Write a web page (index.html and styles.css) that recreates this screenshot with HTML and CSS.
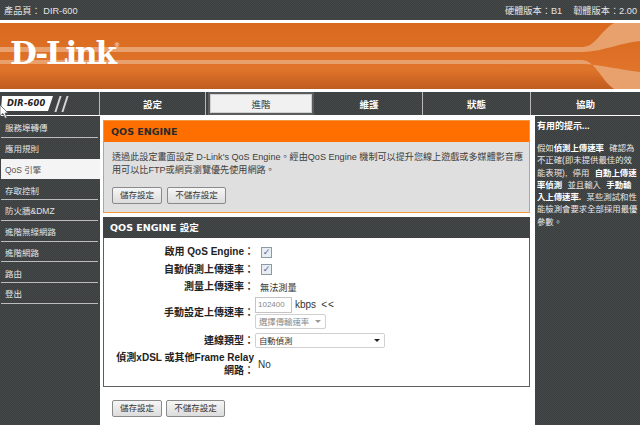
FILE: index.html
```html
<!DOCTYPE html>
<html lang="zh-Hant">
<head>
<meta charset="utf-8">
<title>D-Link DIR-600</title>
<link rel="stylesheet" href="styles.css">
</head>
<body>
<div class="page">
  <header class="topbar">
    <span>產品頁： DIR-600</span>
    <span class="versions"><span>硬體版本：B1</span><span>韌體版本：2.00</span></span>
  </header>
  <div class="banner">
    <svg class="banner-art" viewBox="0 0 640 66" preserveAspectRatio="none" aria-hidden="true">
      <defs>
        <linearGradient id="bg" x1="0" y1="0" x2="0" y2="1">
          <stop offset="0" stop-color="#d9691f"/>
          <stop offset=".7" stop-color="#e0742a"/>
          <stop offset="1" stop-color="#bf5c20"/>
        </linearGradient>
      </defs>
      <rect width="640" height="66" fill="url(#bg)"/>
      <path fill="#e8a06d" d="M0 24H582C596 24 600 8 614 0H640V18C620 20 604 28 584 29H0Z"/>
      <path fill="#e8a06d" d="M0 37H582C596 38 600 56 614 66H640V49C620 47 604 42 584 41H0Z"/>
    </svg>
    <span class="logo">D-Link<sup class="reg">®</sup></span>
  </div>
  <nav class="nav">
    <div class="model">
      <span class="model-badge">DIR-600</span>
      <span class="slashes"><i></i><i></i></span>
      <svg class="cursor" viewBox="0 0 9 14" aria-hidden="true"><path d="M0 0V11L3 8.500L5 13H7L5 8H8Z" fill="#fff" stroke="#555" stroke-width=".8"/></svg>
    </div>
    <a class="tab">設定</a>
    <a class="tab tab-active">進階</a>
    <a class="tab">維護</a>
    <a class="tab">狀態</a>
    <a class="tab tab-last">協助</a>
  </nav>
  <div class="content">
    <aside class="sidebar">
      <a class="side-item">服務埠轉傳</a>
      <a class="side-item">應用規則</a>
      <a class="side-item side-active">QoS 引擎</a>
      <a class="side-item">存取控制</a>
      <a class="side-item">防火牆&amp;DMZ</a>
      <a class="side-item">進階無線網路</a>
      <a class="side-item">進階網路</a>
      <a class="side-item">路由</a>
      <a class="side-item">登出</a>
    </aside>
    <main class="main">
      <section class="intro">
        <h2 class="intro-title">QOS ENGINE</h2>
        <div class="intro-body">
          <p class="intro-text">透過此設定畫面設定 D-Link's QoS Engine。經由QoS Engine 機制可以提升您線上遊戲或多媒體影音應用可以比FTP或網頁瀏覽優先使用網路。</p>
          <div class="buttons"><button class="btn btn-save">儲存設定</button><button class="btn btn-nosave">不儲存設定</button></div>
        </div>
      </section>
      <section class="settings">
        <h2 class="settings-title">QOS ENGINE 設定</h2>
        <div class="form">
          <div class="row"><label class="lbl">啟用 QoS Engine：</label><div class="ctl"><span class="check">✓</span></div></div>
          <div class="row"><label class="lbl">自動偵測上傳速率：</label><div class="ctl"><span class="check">✓</span></div></div>
          <div class="row"><label class="lbl">測量上傳速率：</label><div class="ctl ctl-text">無法測量</div></div>
          <div class="row row-rate"><label class="lbl">手動設定上傳速率：</label>
            <div class="ctl ctl-stack">
              <div class="rate-line"><span class="input">102400</span><span class="unit">kbps</span><span class="arrows">&lt;&lt;</span></div>
              <div class="select select-small"><span>選擇傳輸速率</span><b class="caret caret-light"></b></div>
            </div>
          </div>
          <div class="row row-type"><label class="lbl">連線類型：</label><div class="ctl"><div class="select select-wide"><span>自動偵測</span><b class="caret"></b></div></div></div>
          <div class="row row-xdsl"><label class="lbl">偵測xDSL 或其他Frame Relay 網路：</label><div class="ctl ctl-no">No</div></div>
        </div>
      </section>
      <div class="buttons buttons-bottom"><button class="btn btn-save">儲存設定</button><button class="btn btn-nosave">不儲存設定</button></div>
    </main>
    <aside class="hints">
      <h3 class="hints-title">有用的提示...</h3>
      <p class="hints-text">假如<b>偵測上傳速率</b> 確認為不正確(即未提供最佳的效能表現), 停用 <b>自動上傳速率偵測</b> 並且輸入 <b>手動輸入上傳速率.</b> 某些測試和性能檢測會要求全部採用最優參數。</p>
    </aside>
  </div>
</div>
</body>
</html>
```

FILE: styles.css
```css
* { box-sizing: border-box; }
html, body { margin: 0; padding: 0; background: #fff; }
body { font-family: "Liberation Sans", "Noto Sans CJK TC", sans-serif; font-size: 10px; color: #333; }
.page { width: 640px; height: 425px; overflow: hidden; }

.topbar, .nav, .sidebar, .hints, .settings-title {
  background-color: #404344;
  background-image: repeating-conic-gradient(#3b3e3f 0 25%, #46494a 0 50%);
  background-size: 2px 2px;
}

.topbar { height: 20px; padding: 0 3px 0 4px; display: flex; justify-content: space-between; align-items: center; color: #e4e4e4; font-size: 9.200px; }
.versions { display: flex; gap: 11px; }

.banner { position: relative; height: 66px; margin-top: 3px; overflow: hidden; }
.banner-art { position: absolute; inset: 0; width: 100%; height: 100%; display: block; }
.logo { position: absolute; left: 10px; top: 10px; color: #fff; font: 700 31px/40px "DejaVu Serif", serif; letter-spacing: -2.200px; }
.reg { font: 400 6px/6px "Liberation Sans", sans-serif; letter-spacing: 0; vertical-align: 17px; }

.nav { height: 23px; margin-top: 3px; display: grid; grid-template-columns: 100px 106px 110px 107px 108px 109px; color: #fff; }
.model { position: relative; border-right: 1px solid #b9b9b9; display: flex; align-items: center; }
.model-badge { width: 52px; height: 15px; margin-left: 1px; padding-left: 6px; background: #fff; color: #222; font: italic 700 8.300px/15px "DejaVu Sans", sans-serif; letter-spacing: .2px; clip-path: polygon(1px 0, 100% 0, 47px 100%, 0 100%); }
.slashes { display: flex; gap: 5px; margin-left: 4px; }
.slashes i { display: block; width: 2px; height: 16px; background: #d6d6d6; transform: skewX(-18deg); }
.cursor { position: absolute; left: 0; top: 13px; width: 9px; height: 14px; }
.tab { display: flex; align-items: center; justify-content: center; border-right: 1px solid #b9b9b9; font-weight: 700; font-size: 9.500px; }
.tab-active { background: #f1f1f1; color: #333; border: 2px solid #5a5c5d; margin: 0 2px; box-shadow: inset 0 0 0 1px #cfcfcf; font-weight: 400; }
.tab-last { border-right: 0; }

.content { display: grid; grid-template-columns: 100px 435px 105px; height: 310px; margin-top: 1px; }

.sidebar { padding-top: 1px; }
.side-item { display: flex; align-items: center; height: 20.750px; padding-left: 5px; color: #e3e3e3; font-size: 8.500px; position: relative; }
.side-item::after { content: ""; position: absolute; left: 1px; right: 2px; bottom: 0; height: 1px; background: #bdbdbd; }
.side-active { background: #f4f4f4; color: #555; margin-left: 1px; padding-left: 4px; }
.side-active::after { display: none; }
.side-item:nth-child(2)::after { display: none; }

.main { padding: 4px 0 0 3px; }
.intro { border: 1px solid #f5953f; background: #dfdfdf; height: 93px; margin-right: 5px; }
.intro-title { margin: 0; height: 21px; padding-left: 7px; background: #ff6f00; color: #2a2a2a; font: 700 9.500px/22px "DejaVu Sans", sans-serif; }
.intro-body { padding: 9px 6px 0 8px; }
.intro-text { margin: 0; font-size: 9.100px; line-height: 13px; color: #404040; width: 414px; }
.buttons { display: flex; gap: 5px; margin-top: 10px; }
.btn { height: 17px; padding: 0; border: 1px solid #8a8a8a; border-radius: 2px; background: linear-gradient(#f6f6f6, #dcdcdc); color: #333; font: 400 8.500px/1 "Liberation Sans", "Noto Sans CJK TC", sans-serif; }
.btn-save { width: 50px; }
.btn-nosave { width: 59px; }
.buttons-bottom { gap: 4px; margin: 13px 0 0 9px; }

.settings { margin: 4px 5px 0 0; height: 170px; border: 1px solid #5e5e5e; border-top: 0; }
.settings-title { margin: 0 -1px; height: 21px; padding-left: 7px; color: #fff; font: 700 9.500px/22px "DejaVu Sans", "Noto Sans CJK TC", sans-serif; }
.form { padding-top: 5px; }
.row { display: grid; grid-template-columns: 150px 1fr; column-gap: 1px; align-items: center; min-height: 17.500px; color: #222; }
.lbl { font-weight: 700; font-size: 10px; line-height: 13px; text-align: right; color: #222; padding-left: 8px; }
.ctl { font-size: 10px; color: #333; display: flex; align-items: center; }
.ctl-text { margin-left: 5px; font-size: 9.200px; }
.ctl-no { margin-left: 3px; font-size: 10px; }
.ctl-stack { flex-direction: column; align-items: flex-start; gap: 1px; }
.check { width: 11px; height: 11px; margin: 1px 0 0 6px; border: 1px solid #8d9aa5; background: #e8edf2; color: #4a6a9a; font: 700 9px/9px "DejaVu Sans", sans-serif; text-align: center; }
.row-rate { margin-top: 1px; }
.rate-line { display: flex; align-items: center; }
.input { width: 37px; height: 16px; padding-left: 2px; border: 1px solid #c4c4c4; color: #888; font-size: 8px; line-height: 14px; }
.unit { margin-left: 3px; }
.arrows { margin-left: 5px; letter-spacing: 1px; }
.select { display: flex; align-items: center; justify-content: space-between; border: 1px solid #d0d0d0; border-radius: 2px; height: 15px; padding: 0 4px 0 3px; font-size: 8.400px; color: #555; }
.select-small { width: 71px; color: #888; }
.select-wide { width: 130px; color: #333; }
.caret { width: 0; height: 0; border: 3px solid transparent; border-top: 3px solid #222; border-bottom: 0; }
.caret-light { border-top-color: #999; }
.row-type { margin-top: 3px; }
.row-xdsl { margin-top: 2px; }

.hints { padding: 4px 2px 0 2px; color: #e8e8e8; font-size: 8.400px; line-height: 12.300px; word-spacing: 3px; }
.hints-title { margin: 0 0 10px; font-size: 9px; font-weight: 700; line-height: 12px; color: #fff; }
.hints-text { margin: 0; }
.hints-text b { color: #fff; }
```
